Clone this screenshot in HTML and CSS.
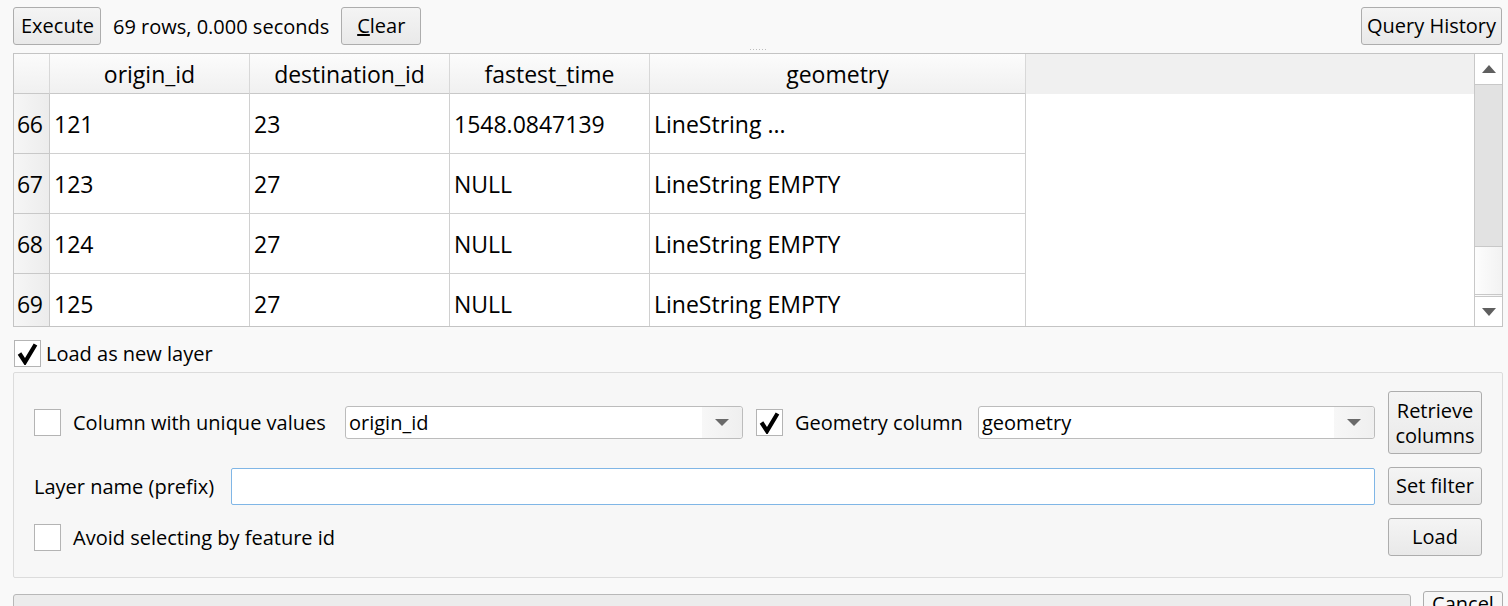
FILE: index.html
```html
<!DOCTYPE html>
<html>
<head>
<meta charset="utf-8">
<link rel="stylesheet" href="styles.css">
</head>
<body>
<div class="app">
  <div class="topbar">
    <button class="btn btn-exec">Execute</button>
    <span class="status">69 rows, 0.000 seconds</span>
    <button class="btn btn-clear"><u>C</u>lear</button>
    <span class="spacer"></span>
    <button class="btn btn-history">Query History</button>
  </div>
  <div class="splitter"><span class="dots"></span></div>
  <div class="table">
    <div class="grid-area">
      <div class="hrow">
        <div class="hcorner"></div>
        <div class="hcell w200">origin_id</div>
        <div class="hcell w200">destination_id</div>
        <div class="hcell w200">fastest_time</div>
        <div class="hcell w376">geometry</div>
        <div class="hfill"></div>
      </div>
      <div class="row">
        <div class="rhead">66</div>
        <div class="cell w200">121</div>
        <div class="cell w200">23</div>
        <div class="cell w200">1548.0847139</div>
        <div class="cell w376">LineString ...</div>
      </div>
      <div class="row">
        <div class="rhead">67</div>
        <div class="cell w200">123</div>
        <div class="cell w200">27</div>
        <div class="cell w200">NULL</div>
        <div class="cell w376">LineString EMPTY</div>
      </div>
      <div class="row">
        <div class="rhead">68</div>
        <div class="cell w200">124</div>
        <div class="cell w200">27</div>
        <div class="cell w200">NULL</div>
        <div class="cell w376">LineString EMPTY</div>
      </div>
      <div class="row">
        <div class="rhead">69</div>
        <div class="cell w200">125</div>
        <div class="cell w200">27</div>
        <div class="cell w200">NULL</div>
        <div class="cell w376">LineString EMPTY</div>
      </div>
    </div>
    <div class="vscroll">
      <div class="sb-btn sb-up"><svg width="16" height="10" viewBox="0 0 16 10"><path d="M1 9 L8 1 L15 9 Z" fill="#5f5f5f"/></svg></div>
      <div class="sb-thumb"></div>
      <div class="sb-track"></div>
      <div class="sb-btn sb-down"><svg width="16" height="10" viewBox="0 0 16 10"><path d="M1 1 L15 1 L8 9 Z" fill="#5f5f5f"/></svg></div>
    </div>
  </div>
  <label class="check-row">
    <span class="cb checked"><svg width="23" height="23" viewBox="0 0 23 23"><path d="M3.5 11.5 L9 20 L19.5 2.5" fill="none" stroke="#000" stroke-width="4.2"/></svg></span>
    <span class="cb-text">Load as new layer</span>
  </label>
  <div class="group">
    <div class="grow grow1">
      <div class="main1">
        <div class="opt opt1"><span class="cb"></span><span class="opt-label">Column with unique values</span></div>
        <div class="combo combo1"><span class="combo-text">origin_id</span><span class="combo-arrow"><svg width="16" height="9" viewBox="0 0 16 9"><path d="M1 1 L15 1 L8 8 Z" fill="#6a6a6a"/></svg></span></div>
        <div class="opt opt2"><span class="cb checked"><svg width="23" height="23" viewBox="0 0 23 23"><path d="M3.5 11.5 L9 20 L19.5 2.5" fill="none" stroke="#000" stroke-width="4.2"/></svg></span><span class="opt-label">Geometry column</span></div>
        <div class="combo combo2"><span class="combo-text">geometry</span><span class="combo-arrow"><svg width="16" height="9" viewBox="0 0 16 9"><path d="M1 1 L15 1 L8 8 Z" fill="#6a6a6a"/></svg></span></div>
      </div>
      <button class="btn side-btn tall">Retrieve<br>columns</button>
    </div>
    <div class="grow grow2">
      <div class="main2">
        <span class="name-label">Layer name (prefix)</span>
        <div class="text-input"></div>
      </div>
      <button class="btn side-btn">Set filter</button>
    </div>
    <div class="grow grow3">
      <div class="main3">
        <div class="opt"><span class="cb"></span><span class="opt-label">Avoid selecting by feature id</span></div>
      </div>
      <button class="btn side-btn">Load</button>
    </div>
  </div>
  <div class="bottombar">
    <div class="progress"></div>
    <button class="btn btn-cancel">Cancel</button>
  </div>
</div>
</body>
</html>
```

FILE: styles.css
```css
* { box-sizing: border-box; }
html, body { margin: 0; padding: 0; }
body {
  background: #f9f9f9;
  font-family: "Open Sans", "Noto Sans", sans-serif;
  font-size: 20px;
  color: #000;
  width: 1508px;
  height: 606px;
  overflow: hidden;
}
.app { padding: 7px 5px 0 13px; }

.btn {
  font: inherit;
  color: #000;
  background: linear-gradient(#f4f4f4, #e9e9e9);
  border: 1px solid #adadad;
  border-radius: 3px;
  padding: 0 7px;
  height: 38px;
  line-height: 1;
  white-space: nowrap;
  cursor: default;
}
.topbar { display: flex; align-items: center; height: 38px; }
.btn-exec { width: 88px; }
.status { margin-left: 12px; margin-right: 12px; }
.btn-clear { width: 80px; }
.spacer { flex: 1; }
.btn-history { width: 141px; margin-right: 1px; padding: 0; }

.splitter { height: 8px; display: flex; justify-content: center; align-items: center; }
.dots { width: 16px; height: 1px; background: repeating-linear-gradient(90deg, #bdbdbd 0 1px, transparent 1px 3px); }

.table {
  display: flex;
  height: 274px;
  border: 1px solid #c4c4c4;
  background: #fff;
  font-size: 23px;
}
.grid-area { flex: 1; overflow: hidden; }
.hrow { display: flex; height: 40px; background: #f0f0f0; }
.hcorner {
  width: 36px; flex: none;
  background: linear-gradient(#fbfbfb, #f0f0f0);
  border-right: 1px solid #d8d8d8;
  border-bottom: 1px solid #c8c8c8;
}
.hcell {
  flex: none;
  display: flex; align-items: center; justify-content: center;
  background: linear-gradient(#fcfcfc, #f0f0f0);
  border-right: 1px solid #d8d8d8;
  border-bottom: 1px solid #c8c8c8;
  white-space: nowrap;
}
.hfill { flex: 1; background: #f0f0f0; }
.w200 { width: 200px; }
.w376 { width: 376px; }

.row { display: flex; height: 60px; }
.rhead {
  width: 36px; flex: none;
  display: flex; align-items: center; padding-left: 3px;
  background: linear-gradient(90deg, #f6f6f6, #ececec);
  border-right: 1px solid #c8c8c8;
  border-bottom: 1px solid #c8c8c8;
  letter-spacing: -0.5px;
}
.cell {
  flex: none;
  display: flex; align-items: center; padding-left: 4px;
  border-right: 1px solid #d0d0d0;
  border-bottom: 1px solid #d0d0d0;
  white-space: nowrap;
}

.vscroll {
  width: 28px; flex: none;
  display: flex; flex-direction: column;
  border-left: 1px solid #c8c8c8;
}
.sb-btn { height: 31px; flex: none; display: flex; align-items: center; justify-content: center; background: #fff; }
.sb-up { border-bottom: 1px solid #c8c8c8; }
.sb-thumb { height: 162px; flex: none; background: #e2e2e2; border-bottom: 1px solid #c8c8c8; }
.sb-track { flex: 1; background: linear-gradient(90deg, #fdfdfd, #f2f2f2); border-bottom: 3px double #c8c8c8; }
.sb-down { height: 29px; }

.check-row { display: flex; align-items: center; margin-top: 13px; height: 27px; margin-left: 1px; }
.cb {
  width: 27px; height: 27px; flex: none;
  background: #fff;
  border: 1px solid #b4b4b4;
  display: inline-flex; align-items: center; justify-content: center;
}
.cb-text { margin-left: 5px; }

.group {
  margin-top: 5px;
  height: 206px;
  border: 1px solid #dcdcdc;
  border-radius: 2px;
  background: #f7f7f7;
  padding: 18px 20px 0 20px;
}
.grow { display: flex; align-items: center; justify-content: space-between; }
.grow1 { height: 63px; }
.grow2 { height: 38px; margin-top: 13px; }
.grow3 { height: 38px; margin-top: 13px; }
.side-btn { width: 94px; flex: none; padding: 0; }
.side-btn.tall { height: 63px; line-height: 1.25; }

.main1, .main2, .main3 { display: flex; align-items: center; width: 1341px; }
.opt { display: flex; align-items: center; }
.opt1 { width: 311px; }
.opt2 { width: 222px; margin-left: 13px; }
.opt-label { margin-left: 12px; white-space: nowrap; }

.combo {
  height: 33px;
  border: 1px solid #bcbcbc;
  border-radius: 3px;
  background: #fff;
  display: flex; align-items: center;
}
.combo1 { width: 398px; }
.combo2 { width: 397px; }
.combo-text { flex: 1; padding-left: 3px; }
.combo-arrow {
  width: 40px; height: 100%;
  display: flex; align-items: center; justify-content: center;
  background: linear-gradient(90deg, #f7f7f7, #efefef);
  border-radius: 0 3px 3px 0;
}

.name-label { width: 197px; white-space: nowrap; }
.text-input {
  width: 1144px; height: 37px;
  background: #fff;
  border: 1px solid #80b6e6;
  border-radius: 2px;
}

.bottombar { display: flex; margin-top: 13px; }
.progress {
  width: 1398px; height: 40px; margin-top: 3px;
  border: 1px solid #b8b8b8;
  border-radius: 3px;
  background: #ececec;
}
.btn-cancel { width: 80px; margin-left: 12px; height: 40px; background: #f7f7f7; padding-bottom: 14px; }
```
